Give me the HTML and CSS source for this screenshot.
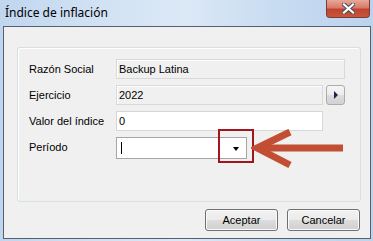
FILE: index.html
```html
<!DOCTYPE html>
<html lang="es">
  <head>
    <meta charset="UTF-8" />
    <title>Índice de inflación</title>
    <link rel="stylesheet" href="styles.css">
  </head>
  <body>
    <div class="window">
      <div class="titlebar">
        <span class="title">Índice de inflación</span>
        <div class="close">
          <svg width="13" height="11" viewBox="0 0 13 11">
            <path d="M2 1.5 L11 9.5 M11 1.5 L2 9.5" stroke="#4b4f57" stroke-width="4.2" stroke-linecap="square" />
            <path d="M2 1.5 L11 9.5 M11 1.5 L2 9.5" stroke="#ffffff" stroke-width="2.2" stroke-linecap="square" />
          </svg>
        </div>
      </div>
      <div class="client">
        <div class="groupbox">
          <div class="row">
            <label>Razón Social</label>
            <div class="field readonly wide">Backup Latina</div>
          </div>
          <div class="row">
            <label>Ejercicio</label>
            <div class="field readonly">2022</div>
            <div class="smallbtn"><span class="tri-right"></span></div>
          </div>
          <div class="row">
            <label>Valor del índice</label>
            <div class="field">0</div>
          </div>
          <div class="row">
            <label>Período</label>
            <div class="combo">
              <span class="caret"></span>
              <span class="drop"></span>
            </div>
          </div>
        </div>
        <div class="buttons">
          <button class="btn">Aceptar</button>
          <button class="btn">Cancelar</button>
        </div>
      </div>

      <!-- anotacion: recuadro y flecha -->
      <div class="highlight"></div>
      <svg class="arrow" width="100" height="44" viewBox="0 0 100 44">
        <path d="M39 3 L6 19 L39 36" fill="none" stroke="#c24f33" stroke-width="7" stroke-linejoin="miter" />
        <path d="M10 19 L92 19" stroke="#c24f33" stroke-width="7" />
      </svg>
    </div>
  </body>
</html>
```
FILE: styles.css
```css
body {
  margin: 0;
  font-family: "Liberation Sans", Arial, sans-serif;
  font-size: 11px;
}

.window {
  position: relative;
  width: 373px;
  height: 241px;
  box-sizing: border-box;
  padding: 0 2px 2px 3px;
  display: flex;
  flex-direction: column;
  background: linear-gradient(90deg, #c0d6ef 0%, #d3e3f4 30%, #dbe8f6 50%, #c7dbf1 75%, #bcd3ee 100%);
}

.titlebar {
  height: 26px;
  display: flex;
  justify-content: space-between;
  align-items: flex-start;
}

.title {
  font-family: "Noto Sans", "Open Sans", sans-serif;
  font-size: 12px;
  color: #000;
  margin: 5px 0 0 2px;
  line-height: 15px;
}

.close {
  width: 44px;
  height: 18px;
  margin-right: 1px;
  box-sizing: border-box;
  border: 1px solid #7b3a32;
  border-top: none;
  border-radius: 0 0 4px 4px;
  background: linear-gradient(#e8a898 0%, #d87a68 45%, #c0442f 55%, #c9553c 100%);
  display: flex;
  justify-content: center;
  align-items: center;
}

.client {
  flex: 1;
  border: 1px solid #55606c;
  background: #f0f0f0;
  display: flex;
  flex-direction: column;
}

.groupbox {
  margin: 20px 9px 0 13px;
  height: 155px;
  box-sizing: border-box;
  border: 1px solid #d5dfe5;
  border-radius: 3px;
  box-shadow: inset 1px 1px 0 #fff;
  padding: 11px 0 0 11px;
  display: flex;
  flex-direction: column;
  gap: 6px;
}

.row {
  display: flex;
  align-items: center;
  height: 20px;
}

.row label {
  width: 87px;
  color: #000;
}

.field {
  width: 207px;
  height: 20px;
  box-sizing: border-box;
  border: 1px solid #d6d6d6;
  background: #fff;
  padding: 0 2px;
  line-height: 18px;
  color: #000;
}

.field.readonly {
  background: #f0f0f0;
  border-color: #d9d9d9;
  box-shadow: inset 1px 1px 0 #fff;
}

.field.wide {
  width: 229px;
}

.smallbtn {
  width: 19px;
  height: 20px;
  margin-left: 3px;
  box-sizing: border-box;
  border: 1px solid #acacac;
  border-radius: 3px;
  background: linear-gradient(#f6f6f6 0%, #ebebeb 50%, #dddddd 51%, #d2d2d2 100%);
  display: flex;
  justify-content: center;
  align-items: center;
}

.tri-right {
  width: 0;
  height: 0;
  border-top: 4px solid transparent;
  border-bottom: 4px solid transparent;
  border-left: 4px solid #1a2450;
  margin-left: 1px;
}

.combo {
  width: 131px;
  height: 22px;
  margin-top: 2px;
  box-sizing: border-box;
  border: 1px solid #a5a5a5;
  background: #fff;
  display: flex;
  align-items: center;
  justify-content: space-between;
  padding: 0 7px 0 4px;
}

.caret {
  width: 1px;
  height: 12px;
  background: #000;
}

.drop {
  width: 0;
  height: 0;
  border-left: 3.5px solid transparent;
  border-right: 3.5px solid transparent;
  border-top: 4px solid #000;
  margin-top: 1px;
}

.buttons {
  display: flex;
  justify-content: flex-end;
  gap: 9px;
  margin-top: 7px;
  padding-right: 10px;
}

.btn {
  width: 73px;
  height: 22px;
  box-sizing: border-box;
  border: 1px solid #707070;
  border-radius: 3px;
  background: linear-gradient(#f2f2f2 0%, #ebebeb 50%, #dddddd 51%, #cfcfcf 100%);
  box-shadow: inset 0 0 0 1px #fbfbfb;
  font-family: "Liberation Sans", Arial, sans-serif;
  font-size: 11px;
  color: #000;
  padding: 0;
}

.highlight {
  position: absolute;
  left: 218px;
  top: 129px;
  width: 36px;
  height: 34px;
  box-sizing: border-box;
  border: 2px solid #a3151c;
}

.arrow {
  position: absolute;
  left: 251px;
  top: 129px;
}
```
